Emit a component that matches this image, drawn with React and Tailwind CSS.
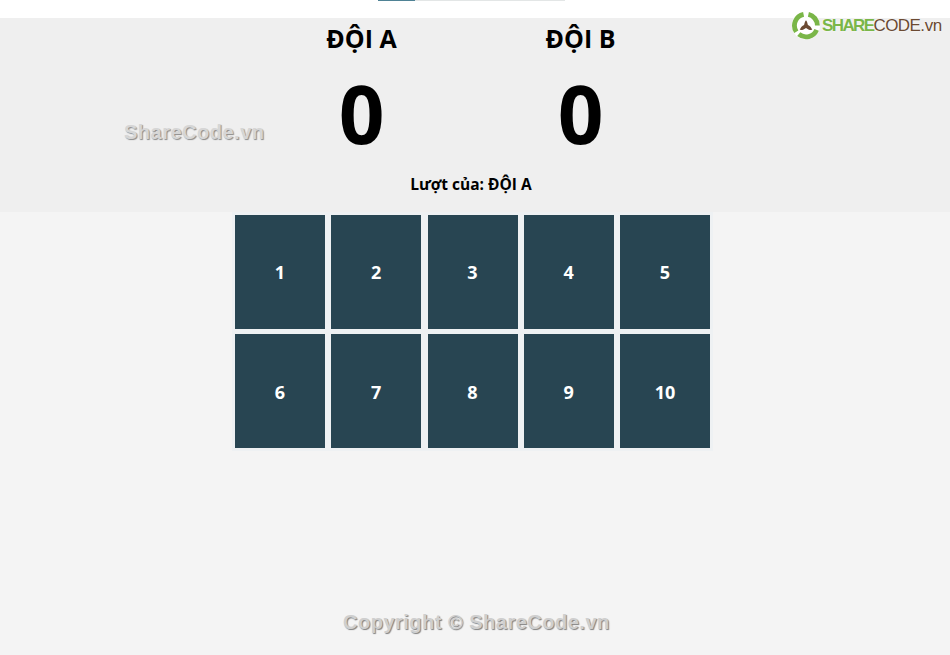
const cards = [1, 2, 3, 4, 5, 6, 7, 8, 9, 10];

const teams = [
  { name: 'ĐỘI A', score: 0 },
  { name: 'ĐỘI B', score: 0 },
];

function Logo() {
  return (
    <div className="absolute top-[11px] left-[791px] flex items-center">
      <svg width="30" height="29" viewBox="0 0 30 30" className="block">
        <circle cx="15" cy="15" r="14.5" fill="#ffffff" />
        <g fill="none" stroke="#7ab648" strokeWidth="5">
          <path d="M12.5 3.5 A11.8 11.8 0 0 0 5 21.5" />
          <path d="M17.5 3.5 A11.8 11.8 0 0 1 26.8 15" />
          <path d="M7.5 24 A11.8 11.8 0 0 0 26 19.5" />
        </g>
        <path d="M15 9.5 C16.5 11.5 16.5 13 17 14.5 C19 15.5 20.5 17 21.5 19.5 C19 20 17 19 15 17.5 C13 19 11 20 8.5 19.5 C9.5 17 11 15.5 13 14.5 C13.5 13 13.5 11.5 15 9.5 Z" fill="#6b4a32" />
      </svg>
      <div className="ml-[1px] flex items-baseline text-[17px] leading-none font-['Liberation_Sans',sans-serif] [text-shadow:0_0_2px_#ffffff]">
        <span className="font-bold text-[#7ab648] tracking-[-1.6px]">SHARE</span>
        <span className="text-[#6b4a32] tracking-[-0.6px]">CODE</span>
        <span className="text-[#6b4a32] tracking-[-0.3px]">.vn</span>
      </div>
    </div>
  );
}

export default function App() {
  return (
    <div className="relative h-[655px] overflow-hidden bg-[#f4f4f4] font-['Open_Sans',sans-serif]">
      {/* progress bar */}
      <div className="h-[18px] bg-white pl-[378px]">
        <div className="flex h-[1px] w-[187px] bg-[#e3e6e6]">
          <div className="w-[37px] bg-[#4f8295]" />
        </div>
      </div>

      {/* score header */}
      <div className="h-[194px] bg-[#efefef] w-full">
        <div className="flex w-[942px] flex-col items-center">
          <div className="flex justify-center">
            {teams.map((team) => (
              <div key={team.name} className="flex w-[219px] flex-col items-center text-black">
                <h2 className="mt-[4px] text-[25px] leading-[33px] font-bold">{team.name}</h2>
                <div className="mt-[3px] text-[80px] leading-[110px] font-bold">{team.score}</div>
              </div>
            ))}
          </div>
          <p className="mt-[5px] text-[15.5px] leading-[22px] font-bold text-black">Lượt của: ĐỘI A</p>
        </div>
      </div>

      {/* board */}
      <div className="ml-[232px] grid w-[481px] grid-cols-5 gap-x-[6.25px] gap-y-[5.75px] bg-[#eef1f3] p-[3px]">
        {cards.map((n) => (
          <div key={n} className="flex h-[113.5px] items-center justify-center bg-[#284552] pt-[2px] text-[18px] font-bold text-white">
            {n}
          </div>
        ))}
      </div>

      {/* watermarks */}
      <div className="absolute top-[120px] left-[124px] font-['Liberation_Sans',sans-serif] text-[20px] leading-[24px] font-bold tracking-[0.5px] text-[#d6d6d6] [text-shadow:1px_1px_1px_#8a8a8a]">
        ShareCode.vn
      </div>
      <div className="absolute top-[610px] left-[343px] font-['Liberation_Sans',sans-serif] text-[20px] leading-[24px] font-bold tracking-[0.5px] text-[#cfcfcf] [text-shadow:1px_1px_1px_#808080]">
        Copyright © ShareCode.vn
      </div>

      <Logo />
    </div>
  );
}
